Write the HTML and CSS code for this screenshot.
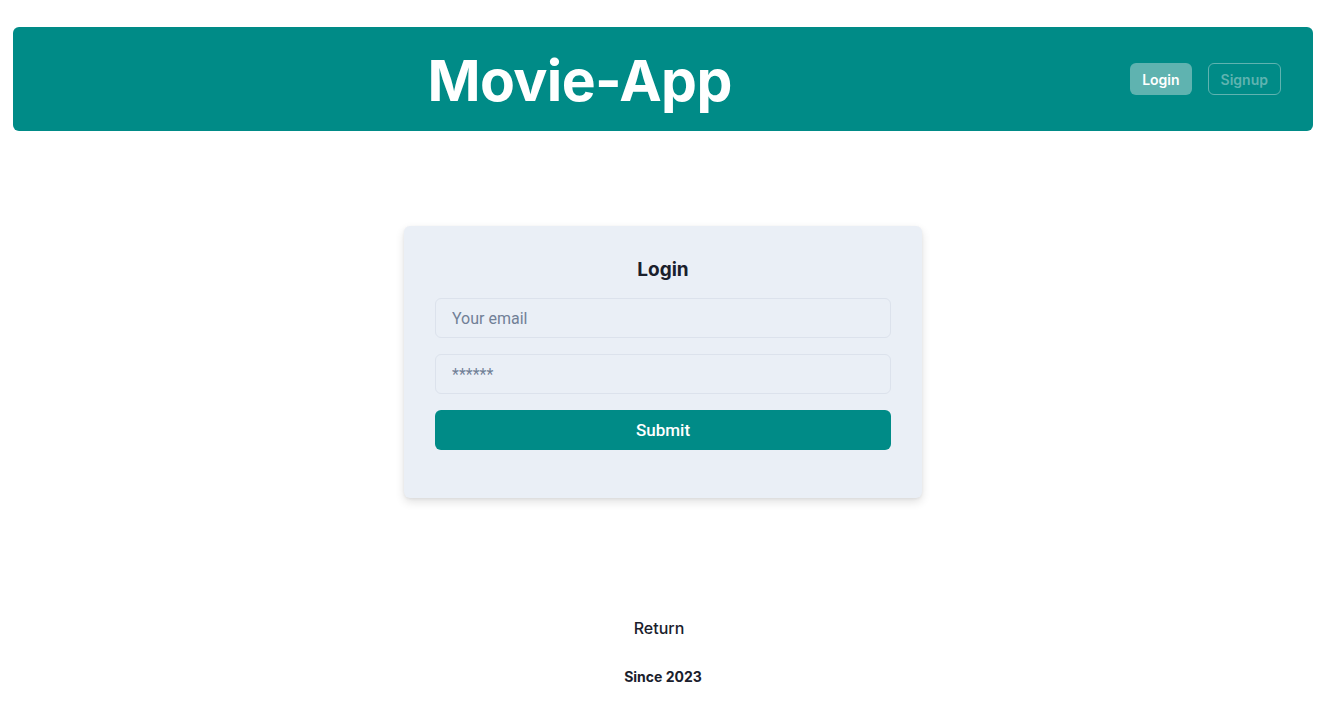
FILE: index.html
```html
<!DOCTYPE html>
<html lang="en">
<head>
<meta charset="utf-8">
<title>Movie-App</title>
<link rel="stylesheet" href="styles.css">
</head>
<body>
<header class="topbar">
  <div class="brand-wrap"><h1 class="brand">Movie-App</h1></div>
  <nav class="auth">
    <button class="btn-solid">Login</button>
    <button class="btn-outline">Signup</button>
  </nav>
</header>
<main class="main">
  <form class="card">
    <h2 class="card-title">Login</h2>
    <input class="field" type="email" placeholder="Your email">
    <input class="field" type="password" placeholder="******">
    <button class="submit" type="button">Submit</button>
  </form>
</main>
<footer class="footer">
  <a class="return">Return</a>
  <p class="since">Since 2023</p>
</footer>
</body>
</html>
```
FILE: styles.css
```css
* { box-sizing: border-box; }
html, body { margin: 0; padding: 0; background: #fff; }
body {
  font-family: Inter, "Liberation Sans", sans-serif;
  color: #1a202c;
  padding: 27px 16px 0 13px;
}
.topbar {
  background: #008b87;
  border-radius: 6px;
  height: 104px;
  display: flex;
  align-items: center;
  padding: 0 32px;
}
.brand-wrap { flex: 1; display: flex; justify-content: center; padding-right: 16px; }
.brand {
  margin: 0;
  color: #fff;
  font-size: 57px;
  font-weight: 700;
  letter-spacing: -0.6px;
  line-height: 1;
  padding-top: 2px;
}
.auth { display: flex; gap: 16px; align-items: center; }
.auth button {
  font-family: Inter, "Liberation Sans", sans-serif;
  font-size: 14px;
  font-weight: 600;
  height: 32px;
  border-radius: 6px;
  padding: 0 12px;
  cursor: pointer;
}
.btn-solid {
  background: #5fb3b0;
  color: #fff;
  border: none;
}
.btn-outline {
  background: transparent;
  color: #5fb3b0;
  border: 1px solid #5fb3b0;
}
.main {
  display: flex;
  justify-content: center;
  padding-top: 95px;
}
.card {
  width: 518px;
  background: #eaeff6;
  border-radius: 6px;
  box-shadow: 0 4px 10px rgba(0,0,0,0.12), 0 1px 3px rgba(0,0,0,0.06);
  padding: 32px 31px 48px;
  display: flex;
  flex-direction: column;
  gap: 16px;
}
.card-title {
  margin: 0;
  text-align: center;
  font-size: 19px;
  font-weight: 700;
  line-height: 24px;
  color: #1a202c;
}
.field {
  height: 40px;
  width: 100%;
  border: 1px solid #dce2ec;
  border-radius: 6px;
  background: transparent;
  padding: 0 16px;
  font-family: Roboto, Inter, sans-serif;
  font-size: 16px;
  color: #1a202c;
  outline: none;
}
.field::placeholder { color: #718096; }
.submit {
  height: 40px;
  width: 100%;
  border: none;
  border-radius: 6px;
  background: #008b87;
  color: #fff;
  font-family: Roboto, Inter, sans-serif;
  font-size: 17px;
  font-weight: 500;
  cursor: pointer;
}
.footer {
  display: flex;
  flex-direction: column;
  align-items: center;
  padding-top: 118px;
}
.return {
  font-size: 16px;
  font-weight: 500;
  line-height: 24px;
  margin-left: -8px;
  cursor: pointer;
}
.since {
  margin: 27px 0 0;
  font-size: 14px;
  font-weight: 700;
  line-height: 20px;
}
```
